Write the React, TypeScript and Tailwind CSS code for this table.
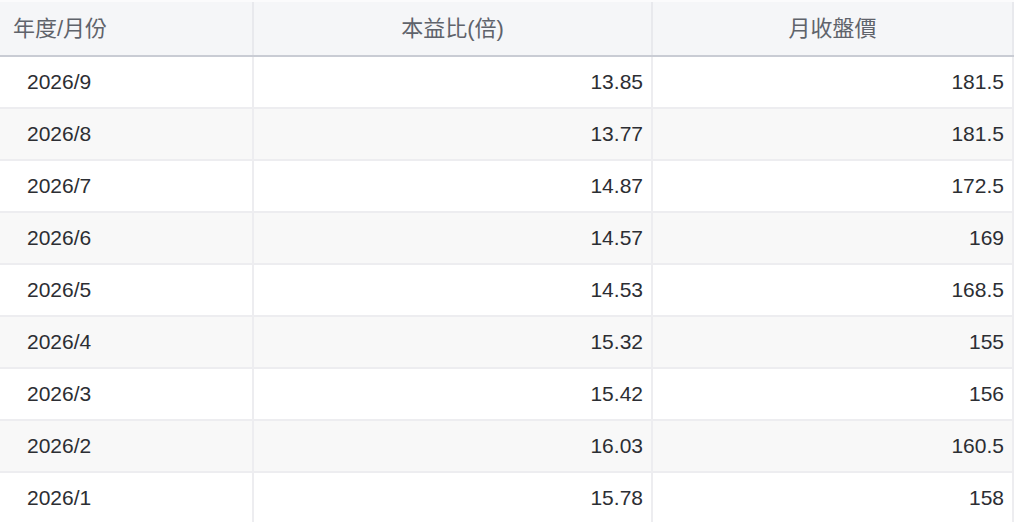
const rows = [
  ["2026/9", "13.85", "181.5"],
  ["2026/8", "13.77", "181.5"],
  ["2026/7", "14.87", "172.5"],
  ["2026/6", "14.57", "169"],
  ["2026/5", "14.53", "168.5"],
  ["2026/4", "15.32", "155"],
  ["2026/3", "15.42", "156"],
  ["2026/2", "16.03", "160.5"],
  ["2026/1", "15.78", "158"],
];

export default function App() {
  return (
    <div
      className="w-[1014px] h-[522px] overflow-hidden bg-white text-[21px]"
      style={{ fontFamily: '"Liberation Sans", "Noto Sans CJK TC", sans-serif' }}
    >
      <div className="border-t-2 border-t-[#fbfbfc]">
        {/* header */}
        <div className="flex h-[55px] bg-[#f5f6f8] border-b-2 border-b-[#c9ccd4] text-[#5f636b] text-[22px]">
          <div className="w-[254px] shrink-0 flex items-center pl-[13px] border-r-2 border-r-[#e8e9ed]">
            年度/月份
          </div>
          <div className="w-[399px] shrink-0 flex items-center justify-center border-r-2 border-r-[#e8e9ed]">
            本益比(倍)
          </div>
          <div className="flex-1 flex items-center justify-center border-r-2 border-r-[#e8e9ed]">
            月收盤價
          </div>
        </div>

        {/* body */}
        {rows.map(([m, pe, price], i) => (
          <div
            key={m}
            className={`flex h-[52px] border-b-2 border-b-[#ededf0] text-[#2c2e33] ${
              i % 2 === 1 ? "bg-[#f8f8f8]" : "bg-white"
            }`}
          >
            <div className="w-[254px] shrink-0 flex items-center pl-[27px] border-r-2 border-r-[#ededf0]">
              {m}
            </div>
            <div className="w-[399px] shrink-0 flex items-center justify-end pr-[8px] border-r-2 border-r-[#ededf0]">
              {pe}
            </div>
            <div className="flex-1 flex items-center justify-end pr-[8px] border-r-2 border-r-[#ededf0]">
              {price}
            </div>
          </div>
        ))}
      </div>
    </div>
  );
}
